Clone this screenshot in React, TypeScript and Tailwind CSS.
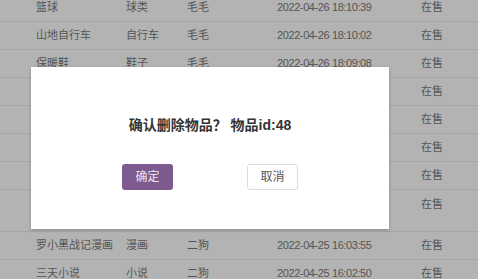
import React from 'react';

const rows = [
  { name: "篮球", cat: "球类", owner: "毛毛", time: "2022-04-26 18:10:39" },
  { name: "山地自行车", cat: "自行车", owner: "毛毛", time: "2022-04-26 18:10:02" },
  { name: "保暖鞋", cat: "鞋子", owner: "毛毛", time: "2022-04-26 18:09:08" },
  { name: "", cat: "", owner: "", time: "" },
  { name: "", cat: "", owner: "", time: "" },
  { name: "", cat: "", owner: "", time: "" },
  { name: "", cat: "", owner: "", time: "" },
  { name: "", cat: "", owner: "", time: "", tall: true },
  { name: "罗小黑战记漫画", cat: "漫画", owner: "二狗", time: "2022-04-25 16:03:55" },
  { name: "三天小说", cat: "小说", owner: "二狗", time: "2022-04-25 16:02:50" },
];

const App = () => {
  return (
    <div
      className="relative w-[478px] h-[279px] overflow-hidden bg-[#b3b3b3] text-[11px] text-[#555]"
      style={{ fontFamily: '"Liberation Sans", "Noto Sans CJK SC", sans-serif' }}
    >
      {/* table under the overlay */}
      <div className="-mt-[6px]">
        {rows.map((r, i) => (
          <div
            key={i}
            className={
              "flex border-b border-[#a6a6a6] " +
              (r.tall ? "h-[42px] items-start pt-[6px]" : "h-[28px] items-center")
            }
          >
            <div className="w-[126px] pl-[36px] whitespace-nowrap">{r.name}</div>
            <div className="w-[61px] whitespace-nowrap">{r.cat}</div>
            <div className="w-[90px] whitespace-nowrap">{r.owner}</div>
            <div className="w-[144px] whitespace-nowrap tracking-[-0.4px]">{r.time}</div>
            <div className="whitespace-nowrap">在售</div>
          </div>
        ))}
      </div>

      {/* confirm dialog */}
      <div className="absolute left-[31px] top-[67px] w-[358px] h-[162px] bg-white shadow-[0_1px_3px_rgba(0,0,0,0.25)] flex flex-col items-center">
        <div className="mt-[49px] text-[14px] font-bold text-[#333] leading-[18px]">
          确认删除物品？ 物品id:48
        </div>
        <div className="mt-[30px] flex gap-[74px]">
          <button className="w-[51px] h-[26px] rounded-[3px] bg-[#7d5b8e] text-[#ece4f0] text-[12px]">
            确定
          </button>
          <button className="w-[51px] h-[26px] rounded-[3px] bg-white border border-[#dcdcdc] text-[#555] text-[12px]">
            取消
          </button>
        </div>
      </div>
    </div>
  );
};

export default App;
